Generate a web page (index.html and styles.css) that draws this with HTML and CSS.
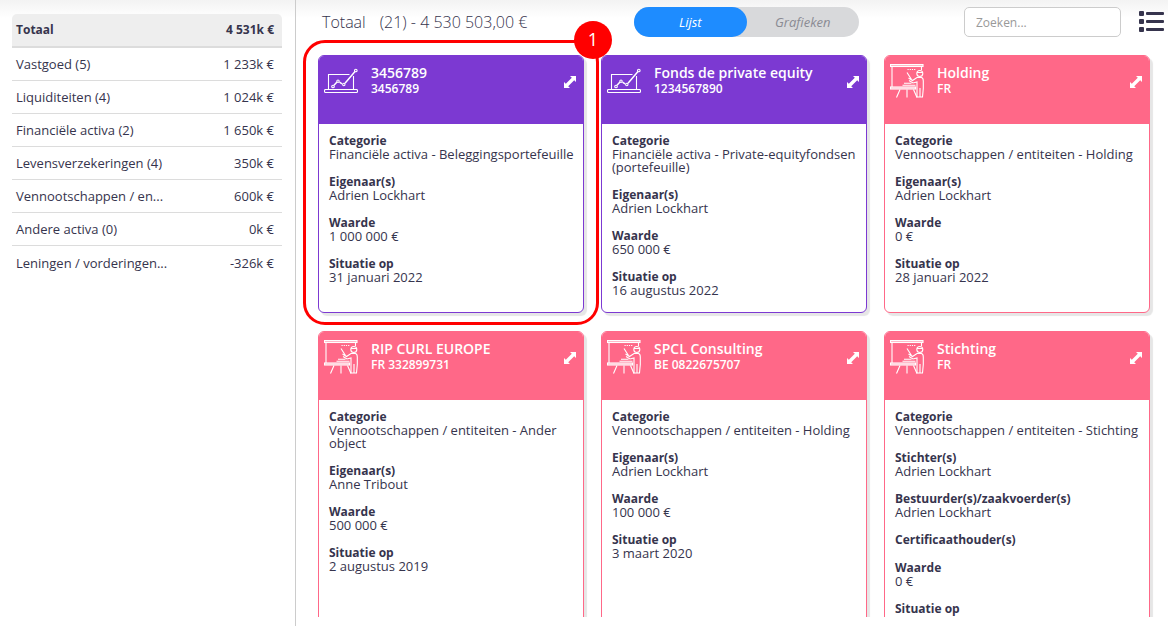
FILE: index.html
```html
<!DOCTYPE html>
<html lang="nl">
<head>
  <meta charset="UTF-8">
  <meta name="viewport" content="width=device-width, initial-scale=1.0">
  <title>Totaal</title>
  <link rel="stylesheet" href="styles.css">
</head>
<body>

  <svg class="sprite" aria-hidden="true">
    <symbol id="icon-chart" viewBox="0 0 34 34">
      <g fill="none" stroke="currentColor" stroke-width="1.1">
        <path d="M4.500 25V10.500H25.500M29.500 12V25"/>
        <rect x="0.500" y="25.500" width="33" height="3" rx="1"/>
        <path d="M10 21.200L13 18M15.500 18.200L18 19.800M21 19.200L31 7.500" stroke-width="1.500"/>
        <circle cx="9" cy="22.500" r="1.300"/>
        <circle cx="14" cy="17.200" r="1.200"/>
        <circle cx="19.800" cy="20.500" r="1.200"/>
        <circle cx="31.800" cy="6.500" r="1.300"/>
      </g>
    </symbol>
    <symbol id="icon-board" viewBox="0 0 34 34">
      <g fill="none" stroke="currentColor" stroke-width="1.100">
        <rect x="0.500" y="0.500" width="32.500" height="2" fill="currentColor" fill-opacity="0.5"/>
        <path d="M2 3V23M31.500 3V6"/>
        <rect x="0.500" y="23" width="25" height="2" fill="currentColor" fill-opacity="0.5"/>
        <path d="M10 25.500L6.500 33.500M17 25.500V33.500M23.500 25.500L27 33.500"/>
        <circle cx="29.800" cy="9.500" r="3"/>
        <path d="M27 8.500H32.500"/>
        <path d="M17 8.500L21.500 15.500M18.500 14L22.500 16.500L27 13.500H31.500Q33.300 14 33.300 17V24.500L32.500 33H27V18L23 19L19 16.500"/>
        <path d="M30 24V33"/>
        <path d="M14 19.200H21.500M12.500 21.200H25.500"/>
        <path d="M17.500 5.500H26" stroke-dasharray="1.200 1"/>
      </g>
    </symbol>
    <symbol id="icon-expand" viewBox="0 0 12 12">
      <path fill="currentColor" d="M6 0H12V6L10.200 4.200L4.200 10.200L6 12H0V6L1.800 7.800L7.800 1.800Z"/>
    </symbol>
  </svg>

  <div class="page">
    <aside class="sidebar">
      <table class="summary">
        <thead>
          <tr><th scope="col">Totaal</th><th scope="col">4 531k €</th></tr>
        </thead>
        <tbody>
          <tr><td>Vastgoed (5)</td><td>1 233k €</td></tr>
          <tr><td>Liquiditeiten (4)</td><td>1 024k €</td></tr>
          <tr><td>Financiële activa (2)</td><td>1 650k €</td></tr>
          <tr><td>Levensverzekeringen (4)</td><td>350k €</td></tr>
          <tr><td>Vennootschappen / en...</td><td>600k €</td></tr>
          <tr><td>Andere activa (0)</td><td>0k €</td></tr>
          <tr><td>Leningen / vorderingen...</td><td>-326k €</td></tr>
        </tbody>
      </table>
    </aside>

    <main class="content">
      <header class="toolbar">
        <h1 class="total"><span>Totaal</span><span>(21) - 4 530 503,00 €</span></h1>
        <div class="switch">
          <button type="button" class="active" aria-pressed="true">Lijst</button>
          <button type="button" aria-pressed="false">Grafieken</button>
        </div>
        <div class="tools">
          <input class="search" type="search" placeholder="Zoeken..." aria-label="Zoeken">
          <button type="button" class="list-button" aria-label="Lijst">
            <svg viewBox="0 0 25 22" width="25" height="22">
              <g fill="currentColor">
                <rect x="0" y="0" width="5" height="5" rx="1"/>
                <rect x="0" y="8" width="5" height="5" rx="1"/>
                <rect x="0" y="16" width="5" height="5" rx="1"/>
                <rect x="7" y="1" width="18" height="3" rx="1"/>
                <rect x="7" y="9" width="18" height="3" rx="1"/>
                <rect x="7" y="17" width="18" height="3" rx="1"/>
              </g>
            </svg>
          </button>
        </div>
      </header>

      <section class="cards">
        <div class="marked">
          <article class="card purple">
            <header class="card-header">
              <svg class="card-icon"><use href="#icon-chart"/></svg>
              <div class="card-title"><h2>3456789</h2><p>3456789</p></div>
              <button type="button" class="expand" aria-label="Openen"><svg><use href="#icon-expand"/></svg></button>
            </header>
            <dl class="card-body">
              <dt>Categorie</dt><dd>Financiële activa - Beleggingsportefeuille</dd>
              <dt>Eigenaar(s)</dt><dd>Adrien Lockhart</dd>
              <dt>Waarde</dt><dd>1 000 000 €</dd>
              <dt>Situatie op</dt><dd>31 januari 2022</dd>
            </dl>
          </article>
          <div class="frame"></div>
          <span class="step">1</span>
        </div>

        <article class="card purple">
          <header class="card-header">
            <svg class="card-icon"><use href="#icon-chart"/></svg>
            <div class="card-title"><h2>Fonds de private equity</h2><p>1234567890</p></div>
            <button type="button" class="expand" aria-label="Openen"><svg><use href="#icon-expand"/></svg></button>
          </header>
          <dl class="card-body">
            <dt>Categorie</dt><dd>Financiële activa - Private-equityfondsen (portefeuille)</dd>
            <dt>Eigenaar(s)</dt><dd>Adrien Lockhart</dd>
            <dt>Waarde</dt><dd>650 000 €</dd>
            <dt>Situatie op</dt><dd>16 augustus 2022</dd>
          </dl>
        </article>

        <article class="card pink">
          <header class="card-header">
            <svg class="card-icon"><use href="#icon-board"/></svg>
            <div class="card-title"><h2>Holding</h2><p>FR</p></div>
            <button type="button" class="expand" aria-label="Openen"><svg><use href="#icon-expand"/></svg></button>
          </header>
          <dl class="card-body">
            <dt>Categorie</dt><dd>Vennootschappen / entiteiten - Holding</dd>
            <dt>Eigenaar(s)</dt><dd>Adrien Lockhart</dd>
            <dt>Waarde</dt><dd>0 €</dd>
            <dt>Situatie op</dt><dd>28 januari 2022</dd>
          </dl>
        </article>

        <article class="card pink">
          <header class="card-header">
            <svg class="card-icon"><use href="#icon-board"/></svg>
            <div class="card-title"><h2>RIP CURL EUROPE</h2><p>FR 332899731</p></div>
            <button type="button" class="expand" aria-label="Openen"><svg><use href="#icon-expand"/></svg></button>
          </header>
          <dl class="card-body">
            <dt>Categorie</dt><dd>Vennootschappen / entiteiten - Ander object</dd>
            <dt>Eigenaar(s)</dt><dd>Anne Tribout</dd>
            <dt>Waarde</dt><dd>500 000 €</dd>
            <dt>Situatie op</dt><dd>2 augustus 2019</dd>
          </dl>
        </article>

        <article class="card pink">
          <header class="card-header">
            <svg class="card-icon"><use href="#icon-board"/></svg>
            <div class="card-title"><h2>SPCL Consulting</h2><p>BE 0822675707</p></div>
            <button type="button" class="expand" aria-label="Openen"><svg><use href="#icon-expand"/></svg></button>
          </header>
          <dl class="card-body">
            <dt>Categorie</dt><dd>Vennootschappen / entiteiten - Holding</dd>
            <dt>Eigenaar(s)</dt><dd>Adrien Lockhart</dd>
            <dt>Waarde</dt><dd>100 000 €</dd>
            <dt>Situatie op</dt><dd>3 maart 2020</dd>
          </dl>
        </article>

        <article class="card pink">
          <header class="card-header">
            <svg class="card-icon"><use href="#icon-board"/></svg>
            <div class="card-title"><h2>Stichting</h2><p>FR</p></div>
            <button type="button" class="expand" aria-label="Openen"><svg><use href="#icon-expand"/></svg></button>
          </header>
          <dl class="card-body">
            <dt>Categorie</dt><dd>Vennootschappen / entiteiten - Stichting</dd>
            <dt>Stichter(s)</dt><dd>Adrien Lockhart</dd>
            <dt>Bestuurder(s)/zaakvoerder(s)</dt><dd>Adrien Lockhart</dd>
            <dt>Certificaathouder(s)</dt><dd></dd>
            <dt>Waarde</dt><dd>0 €</dd>
            <dt>Situatie op</dt><dd></dd>
          </dl>
        </article>
      </section>
    </main>
  </div>

</body>
</html>
```

FILE: styles.css
```css
* {
  margin: 0;
  padding: 0;
  box-sizing: border-box;
}

body {
  font-family: "Open Sans", sans-serif;
  font-size: 12px;
  color: #36344d;
  background: #fff linear-gradient(#f3f3f3, #fff 18px) no-repeat;
}

button,
input {
  font-family: inherit;
}

button {
  border: none;
  background: none;
  cursor: pointer;
}

.sprite {
  display: none;
}

.page {
  display: flex;
  height: 100vh;
  overflow: hidden;
}

/* Sidebar */
.sidebar {
  flex: 0 0 296px;
  padding: 14px 13px 0 12px;
  border-right: 1px solid #ccc;
}

.summary {
  width: 100%;
  border-collapse: separate;
  border-spacing: 0;
}

.summary th,
.summary td {
  height: 33px;
  padding: 0 8px 0 4px;
  font-size: 13px;
  line-height: 18px;
  text-align: left;
  border-bottom: 1px solid #dcdcdc;
}

.summary th {
  height: 34px;
  font-size: 12px;
  font-weight: 700;
  background-color: #eee;
  border-bottom: 2px solid #dcdcdc;
}

.summary th:first-child {
  border-top-left-radius: 5px;
}

.summary th:last-child {
  border-top-right-radius: 5px;
}

.summary th:last-child,
.summary td:last-child {
  text-align: right;
}

.summary tr:last-child td {
  border-bottom: none;
}

/* Toolbar */
.content {
  flex: 1;
  margin-bottom: 9px;
  overflow: hidden;
}

.toolbar {
  display: grid;
  grid-template-columns: 312px 225px 1fr;
  align-items: center;
  padding: 7px 4px 0 26px;
}

.total {
  display: flex;
  gap: 14px;
  font-size: 16px;
  font-weight: 300;
}

.switch {
  display: flex;
  height: 30px;
  border-radius: 15px;
  background-color: #d8d9db;
}

.switch button {
  flex: 1;
  border-radius: 15px;
  font-size: 13px;
  font-style: italic;
  color: #8a8b93;
}

.switch .active {
  background-color: #1e8cff;
  color: #fff;
}

.tools {
  display: flex;
  justify-content: flex-end;
  align-items: center;
  gap: 18px;
}

.search {
  width: 157px;
  height: 30px;
  padding: 0 11px;
  border: 1px solid #ccc;
  border-radius: 5px;
  background-color: #fff;
  font-size: 12px;
}

.search::placeholder {
  color: #999;
}

.list-button {
  color: #36344d;
}

.list-button svg {
  display: block;
}

/* Cards */
.cards {
  display: grid;
  grid-template-columns: repeat(3, 1fr);
  gap: 18px 17px;
  padding: 18px 18px 0 22px;
}

.marked {
  position: relative;
  display: grid;
}

.card {
  border: 1px solid;
  border-radius: 6px;
  background-color: #fff;
  box-shadow: 3px 3px 1px #e6e6e6;
  overflow: hidden;
}

.purple {
  border-color: #7c39d2;
}

.pink {
  border-color: #ff6888;
}

.purple .card-header {
  background-color: #7c39d2;
}

.pink .card-header {
  background-color: #ff6888;
}

.card-header {
  display: flex;
  gap: 13px;
  height: 68px;
  padding: 8px 7px 0 5px;
  color: #fff;
}

.card-icon {
  width: 34px;
  height: 34px;
}

.card-title {
  flex: 1;
}

.card-title h2 {
  font-size: 14px;
  font-weight: 600;
  line-height: 18px;
}

.card-title p {
  font-size: 12px;
  font-weight: 600;
  line-height: 14px;
}

.expand {
  align-self: flex-start;
  padding-top: 12px;
  color: #fff;
}

.expand svg {
  display: block;
  width: 12px;
  height: 12px;
}

.card-body {
  padding: 9px 4px 2px 10px;
}

.card-body dt {
  font-weight: 700;
  line-height: 15px;
}

.card-body dd {
  margin-bottom: 13px;
  font-size: 13px;
  line-height: 13px;
}

/* Step marker around the first card */
.frame {
  position: absolute;
  inset: -15px -15px -12px;
  border: 3px solid #f00;
  border-radius: 22px;
}

.step {
  position: absolute;
  top: -34px;
  right: -28px;
  width: 38px;
  height: 38px;
  border-radius: 50%;
  background-color: #f00;
  color: #fff;
  font-size: 18px;
  line-height: 36px;
  text-align: center;
}
```
